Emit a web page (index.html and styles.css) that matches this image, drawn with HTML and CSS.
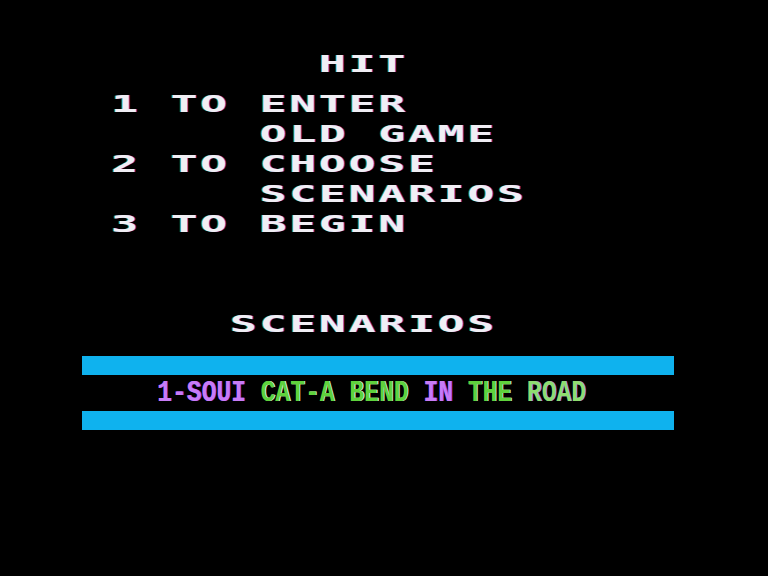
FILE: index.html
```html
<!DOCTYPE html>
<html lang="en">
<head>
    <meta charset="UTF-8">
    <title>Scenario Menu</title>
    <link rel="stylesheet" href="styles.css">
</head>
<body>
    <div class="screen">
        <div class="menu">
            <pre class="hit">       HIT</pre>
            <pre class="options">1 TO ENTER
     OLD GAME
2 TO CHOOSE
     SCENARIOS
3 TO BEGIN</pre>
            <pre class="heading">    SCENARIOS</pre>
        </div>

        <div class="bar"></div>
        <div class="scenario">
            <span class="scenario-text"><span class="pu">1-SOUI</span> <span class="gr">CAT-A BEND</span> <span class="pu">IN</span> <span class="gr">THE</span> <span class="mix">ROAD</span></span>
        </div>
        <div class="bar"></div>
    </div>
</body>
</html>
```

FILE: styles.css
```css
body {
    margin: 0;
    background-color: #000;
    font-family: "DejaVu Sans Mono", monospace;
    color: #f0eef4;
}
.screen {
    width: 768px;
    height: 576px;
    overflow: hidden;
}
.menu {
    margin-left: 111px;
    padding-top: 49px;
    transform: scaleX(1.95);
    transform-origin: left top;
}
.menu pre {
    margin: 0;
    font-family: "DejaVu Sans Mono", monospace;
    font-weight: bold;
    font-size: 23px;
    line-height: 30px;
    letter-spacing: 1.38px;
    text-shadow: 0.5px 0 rgba(170, 70, 255, 0.75), -0.5px 0 rgba(70, 210, 70, 0.6);
}
.hit {
    margin-bottom: 10px !important;
}
.heading {
    margin-top: 70px !important;
}
.bar {
    margin-left: 82px;
    width: 592px;
    height: 19px;
    background-color: #0fb2ee;
}
.menu + .bar {
    margin-top: 17px;
}
.scenario {
    height: 36px;
    padding-left: 157px;
}
.scenario-text {
    display: inline-block;
    font-family: "Liberation Mono", monospace;
    font-weight: bold;
    font-size: 29px;
    line-height: 36px;
    white-space: pre;
    transform: scaleX(0.85);
    transform-origin: left top;
    position: relative;
    top: 1px;
}
.pu {
    color: #c77cf5;
    text-shadow: 1px 0 #9a3ef0;
}
.gr {
    color: #5fd23c;
    text-shadow: 1px 0 #e0f0d8;
}
.mix {
    color: #8fdc70;
    text-shadow: 1px 0 #b060f0;
}
```
